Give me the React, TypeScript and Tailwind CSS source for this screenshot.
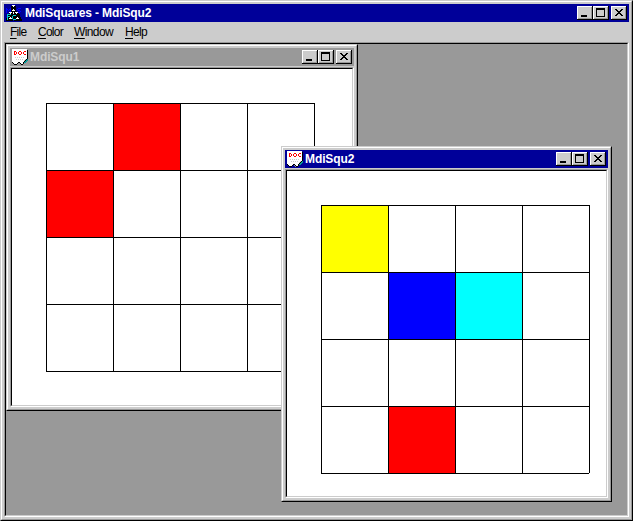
import type { ReactNode } from "react";

const colors: Record<string, string> = {
  k: "#000000",
  w: "#ffffff",
  r: "#ff0000",
  b: "#0000ff",
  c: "#00cccc",
  g: "#999999",
  l: "#cccccc",
  t: "#009999",
};

function PixelIcon({ rows }: { rows: string[] }) {
  return (
    <svg width="16" height="16" viewBox="0 0 16 16" shapeRendering="crispEdges" className="shrink-0">
      {rows.flatMap((row, y) =>
        row.split("").map((p, x) =>
          p === "." ? null : <rect key={`${x}-${y}`} x={x} y={y} width="1" height="1" fill={colors[p]} />,
        ),
      )}
    </svg>
  );
}

const appIcon = [
  "......www.......",
  ".....kkwkk......",
  ".....kkkkk......",
  "b...bkkkkk..bbb.",
  "bb.bbkkwkk.b....",
  "b.b.bkwwwk..bb..",
  "b...bkkkkkk...b.",
  "b..wwwkwkwwwbb..",
  "...kwkkwkkwkk...",
  ".cccckkkkkkkkk..",
  ".ckkkkkccckkkk..",
  ".ccckkckkkkkkk..",
  ".ckkwkckkkkwkkk.",
  "kckwwwckkkwwwkk.",
  "kckkkkkccckkkkkk",
  "kkkkkkk.kkkkkkkk",
];

const docIcon = [
  "wwwwwwwwwwwwwww.",
  "wwwwwwwwwwwwwwwk",
  "wwrrwwwrrwwwrrwk",
  "wwrwrwrwwrwrwwwk",
  "wwrwrwrwwrwrwwwk",
  "wwrrwwwrrwwwrrwk",
  "wwwwwwwwwwwwwwwk",
  "wwwwwwwwwwwwwwwk",
  "wwwlwlwlwlwlwwwk",
  "wwwwwwwwwwwwwwwk",
  "wwwwlwlwlwlwwlkt",
  "wwwwwwwwwwwwlktt",
  "wwwwwwwwwwwwktt.",
  "kwwwwwkkwwwktt..",
  ".kwwwk.gkwwk....",
  "..kkk...gkk.....",
];

function CaptionButton({ kind }: { kind: "min" | "max" | "close" }) {
  return (
    <div className="h-[14px] w-4 bg-black pr-px pb-px">
      <div className="h-full border-t border-l border-white bg-[#999]">
        <div className="mr-px h-[11px] bg-[#ccc]">
          <svg width="13" height="11" viewBox="0 0 13 11" shapeRendering="crispEdges" className="block">
            {kind === "min" && <path d="M3 8h6v2H3z" fill="#000" />}
            {kind === "max" && <path d="M2 1h9v9H2zM3 3v6h7V3z" fill="#000" fillRule="evenodd" />}
            {kind === "close" && (
              <path
                d="M3 2h2v1h-2zM9 2h2v1h-2zM4 3h2v1h-2zM8 3h2v1h-2zM5 4h4v1h-4zM6 5h2v1h-2zM5 6h4v1h-4zM4 7h2v1h-2zM8 7h2v1h-2zM3 8h2v1h-2zM9 8h2v1h-2z"
                fill="#000"
              />
            )}
          </svg>
        </div>
      </div>
    </div>
  );
}

function TitleBar({ title, icon, active, main }: { title: string; icon: string[]; active: boolean; main?: boolean }) {
  return (
    <div className={`flex h-[18px] shrink-0 items-start pt-[2px] pr-[2px] ${active ? "bg-[#000099] text-white" : "bg-[#999] text-[#ccc]"}`}>
      <div className="-mt-px ml-[2px]">
        <PixelIcon rows={icon} />
      </div>
      <span
        className={`-mt-px text-[12px] leading-[16px] font-bold whitespace-pre ${main ? "ml-[3px] tracking-[-0.12px]" : "ml-[2px] tracking-[-0.1px]"}`}
      >
        {title}
      </span>
      <div className="ml-auto flex">
        <CaptionButton kind="min" />
        <CaptionButton kind="max" />
        <div className="w-[2px]" />
        <CaptionButton kind="close" />
      </div>
    </div>
  );
}

function Frame({ children }: { children: ReactNode }) {
  return (
    <div className="h-full border border-t-[#ccc] border-r-black border-b-black border-l-[#ccc]">
      <div className="h-full border border-t-white border-r-[#999] border-b-[#999] border-l-white">
        <div className="flex h-full flex-col bg-[#ccc] p-[2px]">{children}</div>
      </div>
    </div>
  );
}

function Sunken({ children, className }: { children?: ReactNode; className: string }) {
  return (
    <div className="min-h-0 flex-1 border border-t-[#999] border-r-white border-b-white border-l-[#999]">
      <div className={`h-full border border-t-black border-r-[#ccc] border-b-[#ccc] border-l-black ${className}`}>{children}</div>
    </div>
  );
}

function Board({ cells }: { cells: Record<number, string> }) {
  return (
    <div className="relative grid w-[269px] grid-cols-[repeat(4,67px)] grid-rows-[repeat(4,67px)] border-r border-b border-black">
      {Array.from({ length: 16 }, (_, i) => (
        <div key={i} className={`border-t border-l border-black ${cells[i] ?? "bg-white"}`} />
      ))}
      {/* The grid lines stop one pixel short of their common end point. */}
      <div className="absolute -right-px -bottom-px size-px bg-white" />
    </div>
  );
}

function DocumentWindow({ title, active, cells }: { title: string; active: boolean; cells: Record<number, string> }) {
  return (
    <Frame>
      <TitleBar title={title} icon={docIcon} active={active} />
      <div className="h-px shrink-0" />
      <Sunken className="overflow-hidden bg-white pt-[34px] pl-[34px]">
        <Board cells={cells} />
      </Sunken>
    </Frame>
  );
}

const menus = [
  { label: "File", className: "w-7 tracking-[-0.75px]" },
  { label: "Color", className: "w-9 tracking-[-0.75px]" },
  { label: "Window", className: "w-[51px] tracking-[-0.6px]" },
  { label: "Help", className: "w-7 tracking-[-0.7px]" },
];

export default function App() {
  return (
    <div className="relative h-[521px] w-[633px] overflow-hidden font-['Liberation_Sans',Arial,sans-serif] text-black select-none">
      <Frame>
        <TitleBar title="MdiSquares - MdiSqu2" icon={appIcon} active main />
        <nav className="flex h-5 shrink-0 pl-[6px] text-[12px] leading-[20px]">
          {menus.map(({ label, className }) => (
            <span key={label} className={className}>
              <span className="underline decoration-1 underline-offset-2">{label[0]}</span>
              {label.slice(1)}
            </span>
          ))}
        </nav>
        <Sunken className="bg-[#999]" />
      </Frame>
      <section className="absolute top-[44px] left-[6px] h-[367px] w-[352px]">
        <DocumentWindow title="MdiSqu1" active={false} cells={{ 1: "bg-[#ff0000]", 4: "bg-[#ff0000]" }} />
      </section>
      <section className="absolute top-[146px] left-[281px] h-[356px] w-[331px]">
        <DocumentWindow
          title="MdiSqu2"
          active
          cells={{ 0: "bg-[#ffff00]", 5: "bg-[#0000ff]", 6: "bg-[#00ffff]", 13: "bg-[#ff0000]" }}
        />
      </section>
    </div>
  );
}
